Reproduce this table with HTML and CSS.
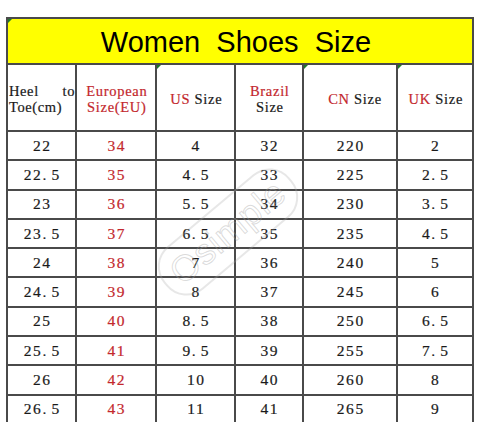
FILE: index.html
```html
<!DOCTYPE html>
<html>
<head>
<meta charset="utf-8">
<link rel="stylesheet" href="styles.css">
</head>
<body>
<div class="chart">
  <div class="grid">
    <div class="cell title mark">Women&nbsp; Shoes&nbsp; Size</div>
    <div class="cell head heel">Heel to Toe(cm)</div>
    <div class="cell head"><span class="lab red">European<br>Size(EU)</span></div>
    <div class="cell head mark"><span class="lab"><span class="red">US</span>&nbsp;Size</span></div>
    <div class="cell head"><span class="lab"><span class="red">Brazil</span><br>Size</span></div>
    <div class="cell head mark cn"><span class="lab"><span class="red">CN</span>&nbsp;Size</span></div>
    <div class="cell head mark"><span class="lab"><span class="red">UK</span>&nbsp;Size</span></div>

    <div class="cell">22</div><div class="cell red">34</div><div class="cell">4</div><div class="cell">32</div><div class="cell">220</div><div class="cell">2</div>
    <div class="cell">22<span class="dot">.</span>5</div><div class="cell red">35</div><div class="cell">4<span class="dot">.</span>5</div><div class="cell">33</div><div class="cell">225</div><div class="cell">2<span class="dot">.</span>5</div>
    <div class="cell">23</div><div class="cell red">36</div><div class="cell">5<span class="dot">.</span>5</div><div class="cell">34</div><div class="cell">230</div><div class="cell">3<span class="dot">.</span>5</div>
    <div class="cell">23<span class="dot">.</span>5</div><div class="cell red">37</div><div class="cell">6<span class="dot">.</span>5</div><div class="cell">35</div><div class="cell">235</div><div class="cell">4<span class="dot">.</span>5</div>
    <div class="cell">24</div><div class="cell red">38</div><div class="cell">7</div><div class="cell">36</div><div class="cell">240</div><div class="cell">5</div>
    <div class="cell">24<span class="dot">.</span>5</div><div class="cell red">39</div><div class="cell">8</div><div class="cell">37</div><div class="cell">245</div><div class="cell">6</div>
    <div class="cell">25</div><div class="cell red">40</div><div class="cell">8<span class="dot">.</span>5</div><div class="cell">38</div><div class="cell">250</div><div class="cell">6<span class="dot">.</span>5</div>
    <div class="cell">25<span class="dot">.</span>5</div><div class="cell red">41</div><div class="cell">9<span class="dot">.</span>5</div><div class="cell">39</div><div class="cell">255</div><div class="cell">7<span class="dot">.</span>5</div>
    <div class="cell">26</div><div class="cell red">42</div><div class="cell">10</div><div class="cell">40</div><div class="cell">260</div><div class="cell">8</div>
    <div class="cell">26<span class="dot">.</span>5</div><div class="cell red">43</div><div class="cell">11</div><div class="cell">41</div><div class="cell">265</div><div class="cell">9</div>
  </div>
  <div class="stamp"><span>Osimple</span></div>
</div>
</body>
</html>
```
FILE: styles.css
```css
html, body {
  margin: 0;
  padding: 0;
  background: #ffffff;
  overflow: hidden;
}

.chart {
  position: relative;
  padding: 17px 0 0 6px;
}

.grid {
  display: grid;
  width: 468px;
  box-sizing: border-box;
  grid-template-columns: 67px 78px 77px 66px 92px 74px;
  grid-template-rows: 44px 65px repeat(10, 27.3px);
  gap: 2px;
  padding: 2px;
  background: #4a4a4a;
}

.cell {
  position: relative;
  background: #ffffff;
  display: flex;
  align-items: center;
  justify-content: center;
  text-align: center;
  font-family: "Liberation Serif", "Times New Roman", serif;
  font-size: 15.5px;
  letter-spacing: 1.6px;
  padding-left: 1.6px;
  box-sizing: border-box;
  color: #1a1a1a;
  -webkit-text-stroke: 0.2px currentColor;
  white-space: nowrap;
}

.dot {
  margin-right: 3.6px;
}

.title {
  grid-column: 1 / -1;
  background: #ffff00;
  font-family: "Liberation Sans", Arial, sans-serif;
  font-size: 29px;
  letter-spacing: 0;
  color: #000000;
  -webkit-text-stroke: 0;
  padding: 2px 8px 0 0;
}

.head {
  font-size: 14.5px;
  line-height: 16px;
  letter-spacing: 0.7px;
  padding-top: 2px;
}

.lab {
  display: block;
}

.heel {
  display: block;
  white-space: normal;
  text-align: justify;
  text-align-last: left;
  letter-spacing: 0.6px;
  padding: 18px 0 0 1px;
}

.cn {
  padding-left: 10px;
}

.red {
  color: #c3272d;
}

.mark::before {
  content: "";
  position: absolute;
  left: 0;
  top: 0;
  width: 0;
  height: 0;
  border-top: 4px solid #1f7a2a;
  border-right: 4px solid transparent;
}

.stamp {
  position: absolute;
  left: 146px;
  top: 204px;
  width: 160px;
  height: 52px;
  border: 2px solid rgba(170, 170, 170, 0.28);
  border-radius: 26px;
  transform: rotate(-40deg);
  display: flex;
  align-items: center;
  justify-content: center;
  pointer-events: none;
}

.stamp span {
  font-family: "Liberation Sans", Arial, sans-serif;
  font-size: 36px;
  color: transparent;
  -webkit-text-stroke: 1px rgba(160, 160, 160, 0.38);
  letter-spacing: 1px;
}
```
